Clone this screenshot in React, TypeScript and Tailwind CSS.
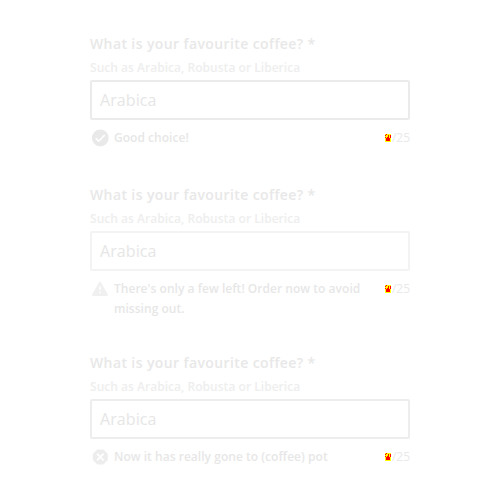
import type { ReactNode } from 'react';

type FieldProps = {
  border: string;
  icon: ReactNode;
  message: string;
};

function ChangedDigit() {
  return (
    <svg className="mt-[6px] h-2 w-1.5 shrink-0" viewBox="0 0 6 8" shapeRendering="crispEdges">
      <path fill="#ffff00" d="M0 0h6v8H0z" />
      <path fill="#ff0000" d="M1 0h1v1H1zM0 1h1v1H0zM5 1h1v3H5zM3 1h1v3H3zM0 3h1v1H0zM2 3h1v1H2zM1 4h4v3H1z" />
    </svg>
  );
}

function Field({ border, icon, message }: FieldProps) {
  return (
    <div className="w-80">
      <div className="h-6 whitespace-nowrap text-[14px] font-semibold leading-5 tracking-[0.39px] text-[#e8e8e8]">
        What is your favourite coffee? *
      </div>
      <div className="h-[22px] whitespace-nowrap text-[12px] font-semibold leading-5 tracking-[0.03px] text-[#eeeeee]">
        Such as Arabica, Robusta or Liberica
      </div>
      <div className={`flex h-10 items-center rounded-[2px] border-2 px-2 text-[16px] tracking-[0.08px] text-[#e6e6e6] ${border}`}>
        Arabica
      </div>
      <div className="mt-2 flex items-start text-[12px] leading-5">
        <div className="flex h-5 w-6 shrink-0 items-center pl-[1px]">{icon}</div>
        <div className="w-[256px] font-semibold tracking-[0.03px] text-[#e7e7e7]">{message}</div>
        <div className="ml-auto flex text-[#e9e9e9]">
          <ChangedDigit />
          <span className="w-[19px] text-right">/25</span>
        </div>
      </div>
    </div>
  );
}

const check = (
  <svg className="size-[18px]" viewBox="0 0 18 18">
    <circle cx="9.3" cy="9" r="8.4" fill="#e9e9e9" />
    <path d="M4.7 9.3 7.7 12.2 13.7 6" fill="none" stroke="#fff" strokeWidth="1.6" />
  </svg>
);
const warning = (
  <svg className="size-[18px]" viewBox="0 0 18 18">
    <path d="M9 2.7 16 15H2z" fill="#f0f0f0" stroke="#f0f0f0" strokeWidth="2" strokeLinejoin="round" />
    <path d="M9 6.5v3.5M9 11.5v1.7" stroke="#fff" strokeWidth="1.6" />
  </svg>
);
const error = (
  <svg className="size-[18px]" viewBox="0 0 18 18">
    <path d="M6.2 1.5h6.2L16.8 6v6l-4.4 4.5H6.2L1.8 12V6z" fill="#ededed" />
    <path d="m6 5.7 6.6 6.6m0-6.6L6 12.3" stroke="#fff" strokeWidth="1.7" />
  </svg>
);

export default function App() {
  return (
    <main className="h-[503px] w-[500px] overflow-hidden bg-white pl-[90px] pt-[34px] font-['Open_Sans','Noto_Sans',sans-serif]">
      <div className="h-[151px]">
        <Field border="border-[#ebebeb]" icon={check} message="Good choice!" />
      </div>
      <div className="h-[168px]">
        <Field border="border-[#f3f3f3]" icon={warning} message="There's only a few left! Order now to avoid missing out." />
      </div>
      <Field border="border-[#ededed]" icon={error} message="Now it has really gone to (coffee) pot" />
    </main>
  );
}
